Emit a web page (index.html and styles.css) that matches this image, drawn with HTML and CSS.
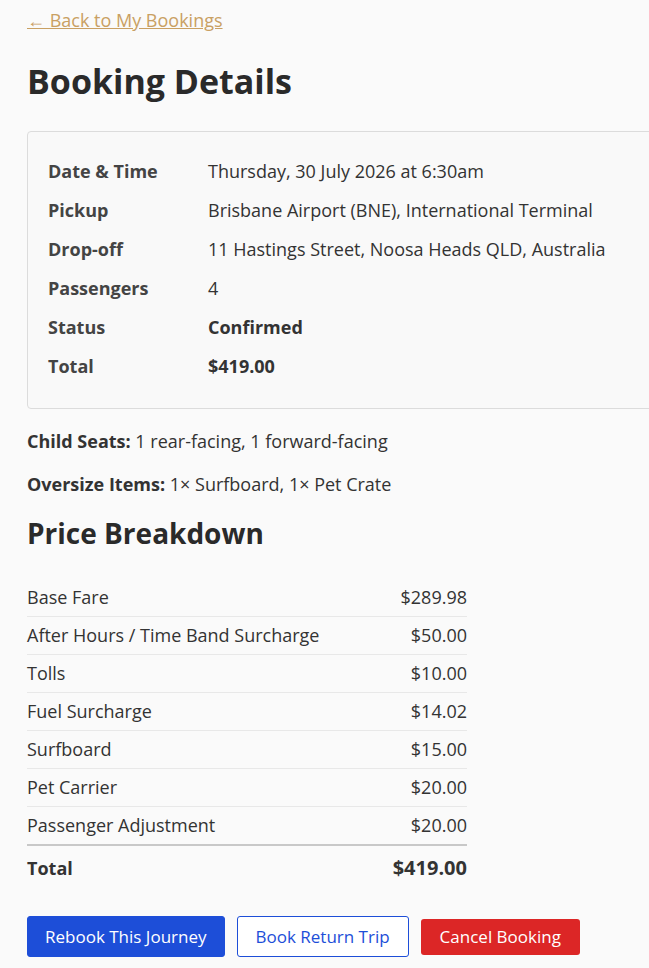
FILE: index.html
```html
<!DOCTYPE html>
<html lang="en">
<head>
  <meta charset="UTF-8">
  <title>Booking Details</title>
  <link rel="stylesheet" href="styles.css">
</head>
<body>

  <div class="page">
    <a href="#" class="back-link">&larr; Back to My Bookings</a>

    <h1 class="page-title">Booking Details</h1>

    <div class="booking-card">
      <table class="details">
        <tr><th>Date &amp; Time</th><td>Thursday, 30 July 2026 at 6:30am</td></tr>
        <tr><th>Pickup</th><td>Brisbane Airport (BNE), International Terminal</td></tr>
        <tr><th>Drop-off</th><td>11 Hastings Street, Noosa Heads QLD, Australia</td></tr>
        <tr><th>Passengers</th><td>4</td></tr>
        <tr><th>Status</th><td><strong>Confirmed</strong></td></tr>
        <tr><th>Total</th><td><strong>$419.00</strong></td></tr>
      </table>
    </div>

    <p class="extra"><strong>Child Seats:</strong> 1 rear-facing, 1 forward-facing</p>
    <p class="extra"><strong>Oversize Items:</strong> 1&times; Surfboard, 1&times; Pet Crate</p>

    <h2 class="section-title">Price Breakdown</h2>

    <table class="price-table">
      <tr><td>Base Fare</td><td class="amount">$289.98</td></tr>
      <tr><td>After Hours / Time Band Surcharge</td><td class="amount">$50.00</td></tr>
      <tr><td>Tolls</td><td class="amount">$10.00</td></tr>
      <tr><td>Fuel Surcharge</td><td class="amount">$14.02</td></tr>
      <tr><td>Surfboard</td><td class="amount">$15.00</td></tr>
      <tr><td>Pet Carrier</td><td class="amount">$20.00</td></tr>
      <tr><td>Passenger Adjustment</td><td class="amount">$20.00</td></tr>
      <tr class="total-row"><td>Total</td><td class="amount">$419.00</td></tr>
    </table>

    <div class="actions">
      <a href="#" class="btn btn-primary">Rebook This Journey</a>
      <a href="#" class="btn btn-outline">Book Return Trip</a>
      <form class="cancel-form" onsubmit="return false;">
        <button type="submit" class="btn btn-danger">Cancel Booking</button>
      </form>
    </div>
  </div>

</body>
</html>
```

FILE: styles.css
```css
* {
  margin: 0;
  padding: 0;
  box-sizing: border-box;
}

html, body {
  overflow-x: hidden;
}

body {
  font-family: "Open Sans", "Noto Sans", Arial, sans-serif;
  background-color: #fafafa;
  color: #333;
  font-size: 18px;
}

.page {
  padding: 8px 27px 40px;
  width: 700px;
}

.back-link {
  color: #c9a063;
  font-size: 18px;
  text-decoration: underline;
}

.page-title {
  font-size: 34px;
  font-weight: 700;
  color: #2a2a2a;
  margin-top: 26px;
  margin-bottom: 27px;
}

.booking-card {
  border: 1px solid #dcdcdc;
  border-radius: 4px;
  background-color: #f9f9f9;
  padding: 20px 20px 22px;
  width: 660px;
}

.details {
  border-collapse: collapse;
}

.details th,
.details td {
  text-align: left;
  padding: 9px 0;
  line-height: 21px;
  vertical-align: top;
}

.details th {
  width: 160px;
  font-weight: 700;
  color: #444;
}

.details td strong {
  color: #333;
}

.extra {
  margin-top: 20px;
}

.extra + .extra {
  margin-top: 19px;
}

.section-title {
  font-size: 28px;
  font-weight: 700;
  color: #2a2a2a;
  margin-top: 18px;
  margin-bottom: 27px;
}

.price-table {
  width: 440px;
  border-collapse: collapse;
}

.price-table td {
  padding: 7px 0 8px;
  line-height: 22px;
  border-bottom: 1px solid #e8e8e8;
}

.price-table .amount {
  text-align: right;
}

/* heavier rule above the total */
.price-table tr:nth-last-child(2) td {
  border-bottom: 2px solid #c8c8c8;
}

.price-table .total-row td {
  font-weight: 700;
  border-bottom: none;
  padding-top: 11px;
}

.price-table .total-row .amount {
  font-size: 20px;
}

.actions {
  display: flex;
  align-items: center;
  gap: 12px;
  margin-top: 29px;
}

.btn {
  display: inline-block;
  font-family: inherit;
  font-size: 17px;
  line-height: 23px;
  padding: 8px 17px;
  border-radius: 3px;
  text-decoration: none;
  cursor: pointer;
}

.btn-primary {
  background-color: #1d4ed8;
  color: #fff;
  border: 1px solid #1d4ed8;
}

.btn-outline {
  background-color: #fff;
  color: #1d4ed8;
  border: 1px solid #1d4ed8;
  padding: 8px 18px;
}

.btn-danger {
  background-color: #dc2626;
  color: #fff;
  border: none;
  padding: 6px 19px;
  line-height: 24px;
}
```
